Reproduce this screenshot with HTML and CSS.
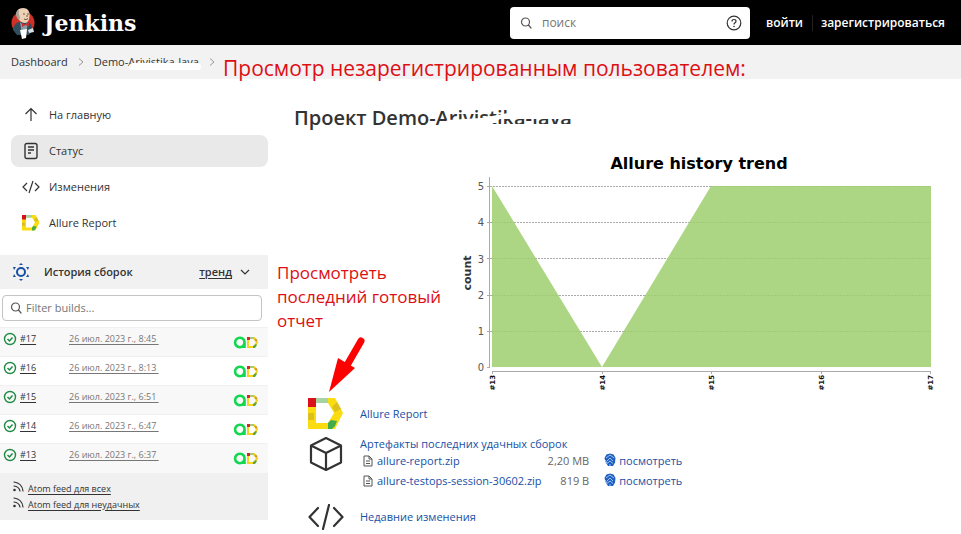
FILE: index.html
```html
<!DOCTYPE html>
<html lang="ru">
<head>
<meta charset="utf-8">
<meta name="viewport" content="width=device-width, initial-scale=1">
<title>Demo-Arivistika-Java [Jenkins]</title>
<link rel="stylesheet" href="styles.css">
</head>
<body>
<svg class="defs" aria-hidden="true">
  <symbol id="allure" viewBox="0 0 36 32">
    <path d="M0 0H27L35 15L27 31H0ZM8 5V25H20L26 15L20 5Z" fill="#fbdc10" fill-rule="evenodd"/>
    <path d="M0 0H8V9H0Z" fill="#d9111b"/>
    <path d="M8 0H20V5H8Z" fill="#a5d3a2"/>
    <path d="M0 15H6V22H0Z" fill="#dcc01c"/>
    <path d="M24 9L29 4L33 11L27 14Z" fill="#dcc01c"/>
    <path d="M20 25L23 22L29 23L27 28L24 31H20Z" fill="#43ab49"/>
  </symbol>
  <symbol id="ad" viewBox="0 0 26 13">
    <path d="M11.500 6.500A4.700 4.700 0 1 1 7 1.800Q11.500 2 11.500 6.500V12" fill="none" stroke="#12d850" stroke-width="2.600"/>
    <path d="M15 2H21L24 6.500L21 11H15Z" fill="none" stroke="#f8d31c" stroke-width="2"/>
    <path d="M14 1H17V4H14Z" fill="#d9222a"/>
    <path d="M17 1H21V3H17Z" fill="#a8c97c"/>
    <path d="M20 10L23 8L24 9L22 12H20Z" fill="#58a83e"/>
    <path d="M22 3L24 5" stroke="#d49b22" stroke-width="2"/>
  </symbol>
  <symbol id="ok" viewBox="0 0 14 14">
    <circle cx="7" cy="7" r="5.500" fill="none" stroke="#1f8b44" stroke-width="1.400"/>
    <path d="M4.500 7L6.500 9L9.500 5.500" fill="none" stroke="#1f8b44" stroke-width="1.500"/>
  </symbol>
  <symbol id="lens" viewBox="0 0 12 12">
    <circle cx="5.500" cy="5" r="4" fill="none" stroke="currentColor" stroke-width="1.200"/>
    <path d="M8.500 8L11 11" stroke="currentColor" stroke-width="1.200" stroke-linecap="round"/>
  </symbol>
  <symbol id="feed" viewBox="0 0 12 12">
    <path d="M2 1Q10 2 11 10M2 5Q7 5.500 8 10" fill="none" stroke="#333" stroke-width="1.200" stroke-linecap="round"/>
    <circle cx="2.500" cy="9" r="1.300" fill="#333"/>
  </symbol>
  <symbol id="code" viewBox="0 0 36 26">
    <path d="M10 4L1.500 13L10 22M26 4L34.500 13L26 22M21 1L15 25" fill="none" stroke="currentColor" stroke-width="2.200" stroke-linecap="round" stroke-linejoin="round"/>
  </symbol>
  <symbol id="file" viewBox="0 0 10 12">
    <path d="M1 1H6L9 4V11H1ZM6 1V4H9M3 6H7M3 8.500H7" fill="none" stroke="#555" stroke-width="1"/>
  </symbol>
  <symbol id="print" viewBox="0 0 12 14">
    <path d="M6 .5L9.500 1.500L11.500 5L11 9.500L9 13H4L1.500 9L.5 5L2.500 1.500Z" fill="#1c5fc0"/>
    <path d="M2 5L6 2L10 5M3 8L6 5L9 8M3 10.500L6 8L9 10.500M6 11V13M1 7L3 10" fill="none" stroke="#c3dcff" stroke-width=".8"/>
  </symbol>
  <symbol id="chevron" viewBox="0 0 6 10">
    <path d="M1 1.500L5 5L1 8.500" fill="none" stroke="#999" stroke-width="1"/>
  </symbol>
</svg>

<header class="top">
  <a class="brand" href="#">
    <svg class="brand-logo" viewBox="0 0 24 34" aria-hidden="true">
      <circle cx="12" cy="17" r="11.500" fill="#cf3128"/>
      <path d="M2 24Q3 17 8 16L17 16Q22 18 21 25L18 29H6Z" fill="#314e5d"/>
      <path d="M9 16L13 20L17 16L15 28H11Z" fill="#8d9ba3"/>
      <path d="M6 9Q5 2 12 2Q19 2 18.500 10Q18 17 14 17Q8 17 6 9Z" fill="#eed1b4"/>
      <path d="M6 12Q3 6 8 3Q7 7 9 12L8 14Z" fill="#a7a397"/>
      <path d="M12 8H14M16 8H18M13 13Q15 14.500 17 12.500M16 9V11" stroke="#5b4639" stroke-width=".9" fill="none"/>
      <path d="M11 17L14 18.500L18 16V20L14 19L11 21Z" fill="#d22b2d"/>
      <path d="M9 24L16 23L15 32L11 33Z" fill="#fff"/>
      <path d="M17 24L22 22L23 26L18 27Z" fill="#d9dde4"/>
    </svg>
    <span>Jenkins</span>
  </a>
  <form class="search" role="search">
    <svg class="icon-12" aria-hidden="true"><use href="#lens"/></svg>
    <input class="search-input" type="search" aria-label="поиск" placeholder="поиск">
    <button class="help" type="button" aria-label="Справка">
      <svg class="icon-16" viewBox="0 0 16 16" aria-hidden="true">
        <circle cx="8" cy="8" r="6.800" fill="none" stroke="#333" stroke-width="1.200"/>
        <path d="M6 6.500Q6 4.500 8 4.500T10 6.300Q10 7.300 8.800 8Q8 8.500 8 9.500" fill="none" stroke="#333" stroke-width="1.200"/>
        <circle cx="8" cy="11.500" r=".8" fill="#333"/>
      </svg>
    </button>
  </form>
  <nav class="account">
    <a href="#">войти</a>
    <a class="signup" href="#">зарегистрироваться</a>
  </nav>
</header>

<nav class="crumbs">
  <a href="#">Dashboard</a>
  <svg class="chevron" aria-hidden="true"><use href="#chevron"/></svg>
  <a class="masked" href="#">Demo-Arivistika-Java<span class="crumb-mask"></span></a>
  <svg class="chevron" aria-hidden="true"><use href="#chevron"/></svg>
  <p class="note note-title">Просмотр незарегистрированным пользователем:</p>
</nav>

<div class="page">
  <aside class="side">
    <nav class="tasks">
      <a class="task" href="#">
        <svg class="task-icon" viewBox="0 0 18 18" aria-hidden="true"><path d="M9 15V3M3.500 8L9 2.500L14.500 8" fill="none" stroke="#333" stroke-width="1.200"/></svg>
        На главную</a>
      <a class="task task-active" href="#">
        <svg class="task-icon" viewBox="0 0 18 18" aria-hidden="true"><path d="M5 1.500H13Q15 1.500 15 3.500V14.500Q15 16.500 13 16.500H5Q3 16.500 3 14.500V3.500Q3 1.500 5 1.500ZM6 5H12M6 8H12M6 11H9" fill="none" stroke="#333" stroke-width="1.400"/></svg>
        Статус</a>
      <a class="task" href="#">
        <svg class="task-icon" viewBox="0 0 18 18" aria-hidden="true"><path d="M5 5L1 9L5 13M13 5L17 9L13 13M11 3L7 15" fill="none" stroke="#333" stroke-width="1.200"/></svg>
        Изменения</a>
      <a class="task" href="#"><svg class="task-icon" aria-hidden="true"><use href="#allure"/></svg>Allure Report</a>
    </nav>

    <section class="history">
      <header class="history-head">
        <svg class="history-icon" viewBox="0 0 18 18" aria-hidden="true">
          <circle cx="9" cy="9" r="4" fill="none" stroke="#174fa5" stroke-width="2"/>
          <path d="M7 2L9 0L11 2ZM7 16L9 18L11 16ZM1 4L4 4L2 7ZM17 4L14 4L16 7ZM1 14L4 14L2 11ZM17 14L14 14L16 11Z" fill="#174fa5"/>
        </svg>
        <h2>История сборок</h2>
        <a href="#">тренд</a>
        <svg class="down" viewBox="0 0 10 6" aria-hidden="true"><path d="M1 1L5 5L9 1" fill="none" stroke="#333" stroke-width="1.200"/></svg>
      </header>
      <div class="filter">
        <svg class="icon-12" aria-hidden="true"><use href="#lens"/></svg>
        <input type="text" aria-label="Filter builds" placeholder="Filter builds...">
      </div>
      <table class="builds">
        <tr><td><svg aria-hidden="true"><use href="#ok"/></svg></td><td><a href="#">#17</a></td><td><a class="date" href="#">26 июл. 2023 г., 8:45&nbsp;</a></td><td><svg class="ad" aria-hidden="true"><use href="#ad"/></svg></td></tr>
        <tr><td><svg aria-hidden="true"><use href="#ok"/></svg></td><td><a href="#">#16</a></td><td><a class="date" href="#">26 июл. 2023 г., 8:13&nbsp;</a></td><td><svg class="ad" aria-hidden="true"><use href="#ad"/></svg></td></tr>
        <tr><td><svg aria-hidden="true"><use href="#ok"/></svg></td><td><a href="#">#15</a></td><td><a class="date" href="#">26 июл. 2023 г., 6:51&nbsp;</a></td><td><svg class="ad" aria-hidden="true"><use href="#ad"/></svg></td></tr>
        <tr><td><svg aria-hidden="true"><use href="#ok"/></svg></td><td><a href="#">#14</a></td><td><a class="date" href="#">26 июл. 2023 г., 6:47&nbsp;</a></td><td><svg class="ad" aria-hidden="true"><use href="#ad"/></svg></td></tr>
        <tr><td><svg aria-hidden="true"><use href="#ok"/></svg></td><td><a href="#">#13</a></td><td><a class="date" href="#">26 июл. 2023 г., 6:37&nbsp;</a></td><td><svg class="ad" aria-hidden="true"><use href="#ad"/></svg></td></tr>
      </table>
      <footer class="feeds">
        <div><svg class="icon-12" aria-hidden="true"><use href="#feed"/></svg><a href="#">Atom feed для всех</a></div>
        <div><svg class="icon-12" aria-hidden="true"><use href="#feed"/></svg><a href="#">Atom feed для неудачных</a></div>
      </footer>
    </section>
  </aside>

  <main class="main">
    <h1>Проект Demo-<span class="masked">Arivistika-Java<svg class="title-mask" viewBox="0 0 150 28" aria-hidden="true"><path d="M3 20L12 16L45 14L62 11L72 9V2H101V9H108V2H150V15H64L50 24V27H3ZM50 20H150V28H50Z" fill="#fff"/></svg></span></h1>

    <svg class="chart" viewBox="0 0 480 250" role="img" aria-label="Allure history trend">
      <clipPath id="area"><path d="M34 38L144 219L253 38H473V219H34Z"/></clipPath>
      <text class="chart-title" x="241" y="21">Allure history trend</text>
      <path class="grid-lines" d="M32 38.500H473M32 74.500H473M32 110.500H473M32 147.500H473M32 183.500H473"/>
      <path d="M34 38L144 219L253 38H473V219H34Z" fill="#add684"/>
      <path class="grid-lines grid-over" clip-path="url(#area)" d="M34 74.500H473M34 110.500H473M34 147.500H473M34 183.500H473M253 38.500H473"/>
      <path d="M31.500 29V220M29 38.500H32M29 74.500H32M29 110.500H32M29 147.500H32M29 183.500H32M29 219.500H32M34 223.500H473M34.500 223V226M144.500 223V226M253.500 223V226M363.500 223V226M472.500 223V226" fill="none" stroke="#aaa"/>
      <g class="y-labels">
        <text x="26" y="42">5</text><text x="26" y="78">4</text><text x="26" y="115">3</text><text x="26" y="151">2</text><text x="26" y="187">1</text><text x="26" y="223">0</text>
      </g>
      <text class="axis-name" transform="translate(13 125) rotate(-90)">count</text>
      <g class="x-labels">
        <text transform="translate(37 227) rotate(-90)">#13</text>
        <text transform="translate(147 227) rotate(-90)">#14</text>
        <text transform="translate(256 227) rotate(-90)">#15</text>
        <text transform="translate(366 227) rotate(-90)">#16</text>
        <text transform="translate(475 227) rotate(-90)">#17</text>
      </g>
    </svg>

    <div class="links">
      <svg class="link-icon allure-big" aria-hidden="true"><use href="#allure"/></svg>
      <a href="#">Allure Report</a>

      <svg class="link-icon box" viewBox="0 0 36 36" aria-hidden="true"><path d="M18 2L33 9.500V26.500L18 34L3 26.500V9.500ZM3 9.500L18 17L33 9.500M18 17V34" fill="none" stroke="#333" stroke-width="2.200" stroke-linejoin="round"/></svg>
      <div>
        <a href="#">Артефакты последних удачных сборок</a>
        <table class="files">
          <tr><td><svg class="file-icon" aria-hidden="true"><use href="#file"/></svg></td><td><a href="#">allure-report.zip</a></td><td class="size">2,20 MB</td><td><a class="view" href="#"><svg aria-hidden="true"><use href="#print"/></svg>посмотреть</a></td></tr>
          <tr><td><svg class="file-icon" aria-hidden="true"><use href="#file"/></svg></td><td><a href="#">allure-testops-session-30602.zip</a></td><td class="size">819 B</td><td><a class="view" href="#"><svg aria-hidden="true"><use href="#print"/></svg>посмотреть</a></td></tr>
        </table>
      </div>

      <svg class="link-icon changes" aria-hidden="true"><use href="#code"/></svg>
      <a href="#">Недавние изменения</a>
    </div>

    <p class="note note-report">Просмотреть последний готовый отчет</p>
    <svg class="arrow" viewBox="0 0 38 58" aria-hidden="true"><path d="M33 5L18 31" stroke="#fe0000" stroke-width="7" stroke-linecap="round"/><path d="M1 56L10 22L27 32Z" fill="#fe0000"/></svg>
  </main>
</div>
</body>
</html>
```
FILE: styles.css
```css
* { box-sizing: border-box; }

body {
  margin: 0;
  background: #fff;
  color: #333;
  font: 11px/16px "Open Sans", "Noto Sans", sans-serif;
}

a { color: inherit; text-decoration: none; }
svg { display: block; flex: none; }
button, input { font: inherit; color: inherit; }
h1, h2, p { margin: 0; }
table { border-collapse: collapse; }
td { padding: 0; }

.defs { position: absolute; width: 0; height: 0; }
.icon-12 { width: 12px; height: 12px; }
.icon-16 { width: 16px; height: 16px; }

/* Header */
.top {
  display: flex;
  align-items: center;
  height: 45px;
  padding: 0 16px 0 11px;
  background: #000;
  color: #fff;
}
.brand {
  display: flex;
  align-items: center;
  gap: 9px;
  font: bold 22px/32px "DejaVu Serif", serif;
}
.brand-logo { width: 24px; height: 34px; }
.search {
  display: flex;
  align-items: center;
  gap: 10px;
  width: 240px;
  height: 32px;
  margin-left: auto;
  padding: 0 8px 0 10px;
  border-radius: 4px;
  background: #fff;
  color: #555;
}
.search-input {
  flex: 1;
  min-width: 0;
  padding: 0;
  border: 0;
  outline: 0;
  background: none;
  font-size: 12px;
}
.search-input::placeholder, .filter input::placeholder { color: #757575; opacity: 1; }
.help { padding: 0; border: 0; background: none; }
.account {
  display: flex;
  margin-left: 16px;
  font-size: 12px;
  font-weight: 600;
}
.signup {
  margin-left: 9px;
  padding-left: 8px;
  border-left: 1px solid #222;
}

/* Breadcrumbs */
.crumbs {
  position: relative;
  display: flex;
  align-items: center;
  gap: 10px;
  height: 34px;
  padding-left: 11px;
  background: #f2f2f2;
}
.chevron { width: 6px; height: 10px; }
.masked { position: relative; }
.crumb-mask {
  position: absolute;
  right: -2px;
  bottom: 0;
  width: 72px;
  height: 7px;
  border-radius: 4px;
  background: #fff;
}

/* Annotations drawn over the page */
.note {
  position: absolute;
  color: #dd0f14;
}
.note-title {
  top: 7px;
  left: 223px;
  font-size: 21px;
  line-height: 32px;
  white-space: nowrap;
}
.note-report {
  top: 182px;
  left: 9px;
  width: 180px;
  font-size: 17px;
  line-height: 24px;
}
.arrow {
  position: absolute;
  top: 257px;
  left: 60px;
  width: 38px;
  height: 58px;
}

/* Sidebar */
.page {
  display: grid;
  grid-template-columns: 268px 1fr;
  align-items: start;
}
.tasks {
  display: grid;
  gap: 4px;
  padding: 20px 0 16px 11px;
}
.task {
  display: flex;
  align-items: center;
  gap: 9px;
  height: 32px;
  padding-left: 11px;
  border-radius: 8px;
}
.task-active { background: #e9e9e9; }
.task-icon { width: 18px; height: 18px; }
.history-head {
  display: flex;
  align-items: center;
  height: 34px;
  padding: 0 18px 0 12px;
  background: #f1f1f1;
  font-weight: 600;
}
.history-head h2 {
  margin: 0 auto 0 14px;
  font-size: 11px;
  font-weight: 600;
}
.history-head a, .builds a, .feeds a { text-decoration: underline; text-underline-offset: 2px; }
.history-icon { width: 18px; height: 18px; }
.down { width: 10px; height: 6px; margin-left: 8px; }
.filter {
  display: flex;
  align-items: center;
  gap: 4px;
  height: 26px;
  margin: 6px 6px 6px 2px;
  padding: 0 7px;
  border: 1px solid #c3c3c8;
  border-radius: 4px;
  color: #555;
}
.filter input {
  flex: 1;
  min-width: 0;
  padding: 0;
  border: 0;
  outline: 0;
  background: none;
}
.builds { width: 100%; font-size: 9px; }
.builds tr { height: 29px; border-top: 1px solid #f0f0f0; }
.builds tr:nth-child(odd) { background: #f8f8f8; }
.builds td { padding-bottom: 6px; }
.builds td:first-child { width: 20px; padding-left: 3px; }
.builds td:first-child svg { width: 14px; height: 14px; }
.builds td:nth-child(2) { width: 49px; }
.builds td:last-child { width: 35px; padding-bottom: 0; }
.date { color: #777; }
.ad { width: 26px; height: 13px; }
.feeds {
  padding: 8px 0 7px 12px;
  background: #f0f0f0;
  font-size: 9px;
}
.feeds div { display: flex; gap: 4px; }

/* Project page */
.main {
  position: relative;
  padding: 27px 23px 0 26px;
}
h1 { font-size: 20px; font-weight: 600; line-height: 24px; white-space: nowrap; }
.title-mask {
  position: absolute;
  top: 0;
  left: 0;
  width: 150px;
  height: 28px;
}
.chart {
  width: 100%;
  max-width: 480px;
  margin: 18px 0 0 auto;
}
.chart text { font-family: "DejaVu Sans", sans-serif; }
.chart .chart-title { fill: #000; font-size: 16px; font-weight: bold; text-anchor: middle; }
.chart .axis-name { fill: #333; font-size: 11px; font-weight: bold; text-anchor: middle; }
.y-labels { fill: #555; font-size: 10px; text-anchor: end; }
.x-labels { fill: #111; font-size: 7px; font-weight: bold; text-anchor: end; }
.grid-lines { fill: none; stroke: #aaa; stroke-dasharray: 2 1; }
.grid-over { stroke: #9fca78; }

.links {
  display: grid;
  grid-template-columns: 36px 1fr;
  column-gap: 16px;
  align-items: center;
  padding-left: 14px;
  color: #1650a5;
}
.link-icon { width: 36px; height: 36px; }
.allure-big { height: 32px; }
.box { align-self: start; margin-top: 6px; }
.links > div { padding: 6px 0 12px; }
.changes { height: 26px; color: #333; }
.files td { height: 20px; padding: 0 0 2px; }
.files td:first-child { width: 17px; padding-left: 3px; }
.file-icon { width: 10px; height: 12px; }
.files .size { padding-left: 6px; color: #666; text-align: right; }
.view { display: flex; gap: 3px; margin-left: 15px; }
.view svg { width: 12px; height: 14px; }
```
